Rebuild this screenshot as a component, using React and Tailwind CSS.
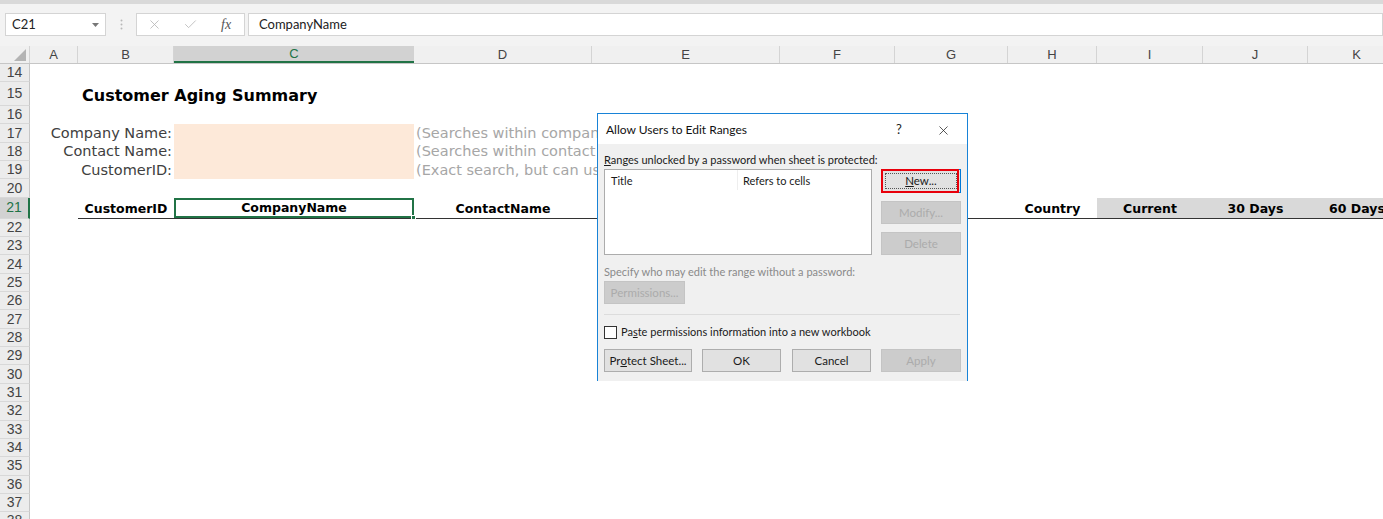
import React from 'react';
import { X, Check } from 'lucide-react';

const COLS = [
    { k: 'A', w: 'w-[48px]' },
    { k: 'B', w: 'w-[96px]' },
    { k: 'C', w: 'w-[240px]' },
    { k: 'D', w: 'w-[178px]' },
    { k: 'E', w: 'w-[188px]' },
    { k: 'F', w: 'w-[115px]' },
    { k: 'G', w: 'w-[113px]' },
    { k: 'H', w: 'w-[89px]' },
    { k: 'I', w: 'w-[106px]' },
    { k: 'J', w: 'w-[105px]' },
    { k: 'K', w: 'w-[98px]' },
];

const gothic = "font-['DejaVu_Sans',sans-serif]";
const ui = "font-['Lato','Liberation_Sans',sans-serif]";

const RowHead = ({ n, active }) => (
    <div
        className={`w-[30px] shrink-0 flex items-center justify-center border-b border-[#d8d8d8] text-[14px] font-['Liberation_Sans',sans-serif] ${
            active ? 'bg-[#d2d2d2] text-[#217346] border-r-2 border-r-[#217346]' : 'bg-[#ececec] text-[#444] border-r border-r-[#c6c6c6]'
        }`}
    >
        {n}
    </div>
);

const Row = ({ n, h = 'h-[18.35px]', active, children }) => (
    <div className={`flex ${h}`}>
        <RowHead n={n} active={active} />
        <div className="flex flex-1">{children}</div>
    </div>
);

const Btn = ({ w, children, disabled }) => (
    <div
        className={`${w} h-[23px] flex items-center justify-center border text-[11.5px] ${
            disabled ? 'bg-[#cccccc] border-[#c4c4c4] text-[#ababab]' : 'bg-[#e1e1e1] border-[#adadad] text-[#1a1a1a]'
        }`}
    >
        {children}
    </div>
);

const Dialog = () => (
    <div className={`absolute left-[597px] top-[113px] w-[371px] h-[268px] bg-[#f0f0f0] border border-b-0 border-[#1883d7] ${ui}`}>
        <div className="h-[30px] bg-white flex items-center pl-[8px] pt-[2px] relative">
            <span className="text-[12px] text-[#111]">Allow Users to Edit Ranges</span>
            <span className="absolute left-[298px] text-[13px] text-[#222]">?</span>
            <X size={15} strokeWidth={1.2} className="absolute left-[338px] text-[#222]" />
        </div>
        <div className="px-[6px] pt-[9px]">
            <div className="text-[11px] leading-[14px] text-[#1a1a1a]">
                <u>R</u>anges unlocked by a password when sheet is protected:
            </div>
            <div className="mt-[2px] flex gap-[9px]">
                <div className="w-[268px] h-[86px] bg-white border border-[#acacac] flex text-[11px] text-[#1a1a1a]">
                    <div className="w-[133px] h-[20px] pl-[6px] pt-[3px] border-r border-[#eeeeee]">Title</div>
                    <div className="pl-[5px] pt-[3px]">Refers to cells</div>
                </div>
                <div className="flex flex-col gap-[8px]">
                    <div className="relative w-[80px] h-[24px] bg-[#e1e1e1] border border-[#0078d7] flex items-center justify-center text-[11.5px] text-[#1a1a1a]">
                        <div className="absolute inset-[3px] border border-dotted border-[#555]" />
                        <div className="absolute left-[-1px] top-[-1px] w-[78px] h-[24px] border-2 border-[#e8000b]" />
                        <span className="relative"><u>N</u>ew...</span>
                    </div>
                    <Btn w="w-[80px]" disabled>Modify...</Btn>
                    <Btn w="w-[80px]" disabled>Delete</Btn>
                </div>
            </div>
            <div className="mt-[10px] text-[11px] leading-[14px] text-[#8a8a8a]">Specify who may edit the range without a password:</div>
            <div className="mt-[2px]">
                <Btn w="w-[81px]" disabled>Permissions...</Btn>
            </div>
            <div className="mt-[10px] w-[356px] border-t border-[#dcdcdc]" />
            <div className="mt-[10px] flex items-center gap-[4px] h-[14px]">
                <div className="w-[13px] h-[13px] bg-white border border-[#333]" />
                <span className="text-[11px] text-[#1a1a1a]">Pa<u>s</u>te permissions information into a new workbook</span>
            </div>
            <div className="mt-[10px] flex">
                <Btn w="w-[88px]">Pr<u>o</u>tect Sheet...</Btn>
                <div className="ml-[10px]"><Btn w="w-[79px]">OK</Btn></div>
                <div className="ml-[11px]"><Btn w="w-[79px]">Cancel</Btn></div>
                <div className="ml-[10px]"><Btn w="w-[80px]" disabled>Apply</Btn></div>
            </div>
        </div>
    </div>
);

export default function App() {
    const blankRows = [];
    for (let n = 22; n <= 38; n++) blankRows.push(n);

    const params = [
        { n: 17, label: 'Company Name:', hint: '(Searches within company name)' },
        { n: 18, label: 'Contact Name:', hint: '(Searches within contact name)' },
        { n: 19, label: 'CustomerID:', hint: '(Exact search, but can use wildcards)' },
    ];

    return (
        <div className="relative w-[1383px] h-[519px] overflow-hidden bg-white">
            {/* ribbon edge + formula bar */}
            <div className="h-[4px] bg-[#d9d9d9]" />
            <div className="h-[42px] bg-[#f3f3f3] flex items-start pt-[9px]">
                <div className="ml-[5px] w-[101px] h-[23px] bg-white border border-[#d4d4d4] flex items-center justify-between pl-[6px] pr-[6px]">
                    <span className={`text-[13px] text-[#222] ${ui}`}>C21</span>
                    <svg width="7" height="4" viewBox="0 0 7 4"><path d="M0 0h7L3.5 4z" fill="#777" /></svg>
                </div>
                <div className="w-[30px] h-[23px] flex items-center justify-center">
                    <svg width="3" height="11" viewBox="0 0 3 11">
                        <circle cx="1.5" cy="1.5" r="1" fill="#b8b8b8" />
                        <circle cx="1.5" cy="5.5" r="1" fill="#b8b8b8" />
                        <circle cx="1.5" cy="9.5" r="1" fill="#b8b8b8" />
                    </svg>
                </div>
                <div className="w-[109px] h-[23px] bg-white border border-[#d4d4d4] flex items-center">
                    <X size={15} strokeWidth={1.3} className="ml-[10px] text-[#b5b5b5]" />
                    <Check size={15} strokeWidth={1.3} className="ml-[21px] text-[#b5b5b5]" />
                    <span className="ml-[23px] text-[14px] italic text-[#555] font-['Liberation_Serif',serif]">fx</span>
                </div>
                <div className="ml-[3px] flex-1 h-[23px] bg-white border border-[#d4d4d4] flex items-center pl-[10px]">
                    <span className={`text-[13px] text-[#222] ${ui}`}>CompanyName</span>
                </div>
            </div>

            {/* column headers */}
            <div className="flex h-[18px] bg-[#f0f0f0] border-b border-[#c6c6c6]">
                <div className="w-[30px] shrink-0 flex items-end justify-end pr-[3px] pb-[2px] border-r border-[#d4d4d4]">
                    <svg width="12" height="12" viewBox="0 0 12 12"><path d="M12 0v12H0z" fill="#b4b4b4" /></svg>
                </div>
                {COLS.map(c => (
                    <div
                        key={c.k}
                        className={`${c.w} shrink-0 flex items-center justify-center text-[13px] font-['Liberation_Sans',sans-serif] ${
                            c.k === 'C'
                                ? 'bg-[#d2d2d2] text-[#217346] border-b-2 border-[#217346]'
                                : 'text-[#444] border-r border-[#d4d4d4]'
                        }`}
                    >
                        {c.k}
                    </div>
                ))}
            </div>

            {/* sheet rows */}
            <Row n={14} h="h-[18px]" />
            <Row n={15} h="h-[24px]">
                <div className="w-[48px]" />
                <div className={`pl-[4px] flex items-end whitespace-nowrap text-[16px] leading-[20px] font-bold text-black ${gothic}`}>
                    Customer Aging Summary
                </div>
            </Row>
            <Row n={16} />
            {params.map(p => (
                <Row key={p.n} n={p.n}>
                    <div className={`w-[144px] shrink-0 flex items-center justify-end pr-[2px] pt-[1px] whitespace-nowrap text-[14.5px] text-[#404040] ${gothic}`}>
                        {p.label}
                    </div>
                    <div className="w-[240px] shrink-0 bg-[#fde9d9]" />
                    <div className={`pl-[2px] pt-[1px] flex items-center whitespace-nowrap text-[14.5px] text-[#a6a6a6] ${gothic}`}>{p.hint}</div>
                </Row>
            ))}
            <Row n={20} />
            <Row n={21} h="h-[21px]" active>
                <div className="w-[48px] shrink-0" />
                <div className={`flex flex-1 border-b border-[#333] text-[12.5px] font-bold text-black ${gothic}`}>
                    <div className="w-[96px] shrink-0 flex items-center justify-center pt-[3px]">CustomerID</div>
                    <div className="relative w-[240px] shrink-0 flex items-center justify-center pt-[2px] border-2 border-[#217346]">
                        CompanyName
                        <div className="absolute right-[-4px] bottom-[-4px] w-[5px] h-[5px] bg-[#217346] border border-white" />
                    </div>
                    <div className="w-[178px] shrink-0 flex items-center justify-center pt-[3px]">ContactName</div>
                    <div className="w-[416px] shrink-0" />
                    <div className="w-[89px] shrink-0 flex items-center justify-center pt-[3px]">Country</div>
                    <div className="w-[106px] shrink-0 flex items-center justify-center pt-[3px] bg-[#d9d9d9]">Current</div>
                    <div className="w-[105px] shrink-0 flex items-center justify-center pt-[3px] bg-[#d9d9d9]">30 Days</div>
                    <div className="w-[98px] shrink-0 flex items-center justify-center pt-[3px] bg-[#d9d9d9]">60 Days</div>
                </div>
            </Row>
            {blankRows.map(n => (
                <Row key={n} n={n} />
            ))}

            <Dialog />
        </div>
    );
}
